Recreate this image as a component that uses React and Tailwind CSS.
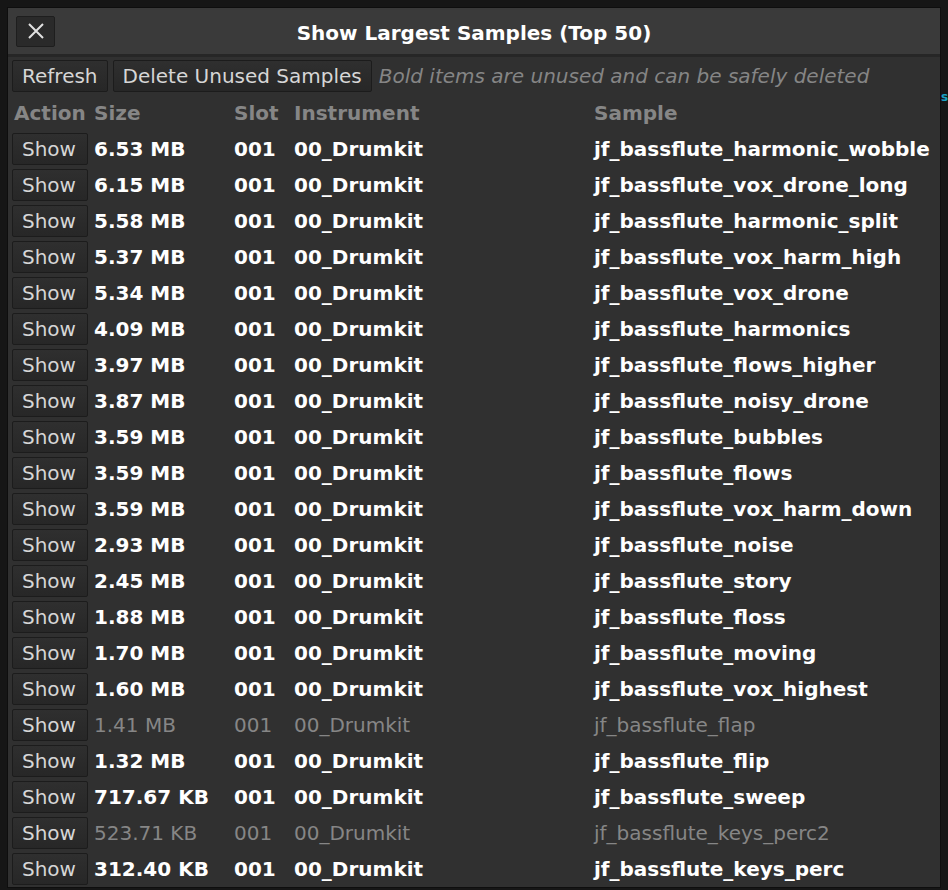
import React from 'react';

const samples = [
    ['6.53 MB', 'jf_bassflute_harmonic_wobble', true],
    ['6.15 MB', 'jf_bassflute_vox_drone_long', true],
    ['5.58 MB', 'jf_bassflute_harmonic_split', true],
    ['5.37 MB', 'jf_bassflute_vox_harm_high', true],
    ['5.34 MB', 'jf_bassflute_vox_drone', true],
    ['4.09 MB', 'jf_bassflute_harmonics', true],
    ['3.97 MB', 'jf_bassflute_flows_higher', true],
    ['3.87 MB', 'jf_bassflute_noisy_drone', true],
    ['3.59 MB', 'jf_bassflute_bubbles', true],
    ['3.59 MB', 'jf_bassflute_flows', true],
    ['3.59 MB', 'jf_bassflute_vox_harm_down', true],
    ['2.93 MB', 'jf_bassflute_noise', true],
    ['2.45 MB', 'jf_bassflute_story', true],
    ['1.88 MB', 'jf_bassflute_floss', true],
    ['1.70 MB', 'jf_bassflute_moving', true],
    ['1.60 MB', 'jf_bassflute_vox_highest', true],
    ['1.41 MB', 'jf_bassflute_flap', false],
    ['1.32 MB', 'jf_bassflute_flip', true],
    ['717.67 KB', 'jf_bassflute_sweep', true],
    ['523.71 KB', 'jf_bassflute_keys_perc2', false],
    ['312.40 KB', 'jf_bassflute_keys_perc', true],
];

const btn = 'flex h-8 items-center rounded-[2px] border border-[#1c1c1c] bg-gradient-to-b from-[#2f2f2f] to-[#272727] px-[9px] text-[#d6d6d6]';

const cols = 'grid grid-cols-[82px_140px_60px_300px_1fr] items-center';

const LargestSamples = () => {
    return (
        <div className="flex h-[890px] overflow-hidden bg-[#161616] pl-2 pt-2 font-['DejaVu_Sans',sans-serif] text-[20px]">
            <div className="flex h-[879px] w-[932px] shrink-0 flex-col bg-[#303030] shadow-[0_0_0_1px_#0e0e0e]">
                <div className="relative flex h-[46px] shrink-0 items-center bg-[#3a3a3a] px-2">
                    <button className="flex h-[31px] w-[39px] items-center justify-center rounded-[2px] border border-[#1e1e1e] bg-[#2a2a2a] text-[#e0e0e0]">
                        <svg width="18" height="18" viewBox="0 0 18 18" fill="none" stroke="currentColor" strokeWidth="2">
                            <path d="M2 2 L16 16 M16 2 L2 16" />
                        </svg>
                    </button>
                    <div className="pointer-events-none absolute inset-0 flex items-center justify-center pt-[3px] font-bold text-white">
                        Show Largest Samples (Top 50)
                    </div>
                </div>
                <div className="h-[3px] shrink-0 bg-[#262626]" />

                <div className="flex items-center gap-[5px] px-1 pt-[3px]">
                    <button className={btn}>Refresh</button>
                    <button className={btn}>Delete Unused Samples</button>
                    <span className="ml-[2px] italic text-[#858585]">Bold items are unused and can be safely deleted</span>
                </div>

                <div className={`${cols} mt-[6px] h-[26px] px-1 font-bold text-[#868686]`}>
                    <span className="pl-[2px]">Action</span>
                    <span>Size</span>
                    <span>Slot</span>
                    <span>Instrument</span>
                    <span>Sample</span>
                </div>

                <div className="mt-[7px] flex flex-col px-1">
                    {samples.map(([size, name, bold], i) => (
                        <div key={i} className={`${cols} h-9 ${bold ? 'font-bold text-white' : 'text-[#868686]'}`}>
                            <div>
                                <button className={`${btn} w-[76px] font-normal`}>Show</button>
                            </div>
                            <span>{size}</span>
                            <span>001</span>
                            <span>00_Drumkit</span>
                            <span className="whitespace-nowrap">{name}</span>
                        </div>
                    ))}
                </div>
            </div>
            <div className="flex flex-1 flex-col pt-[83px] pl-[1px]">
                <span className="text-[12px] font-bold leading-none text-[#1aa3c4]">s</span>
            </div>
        </div>
    );
};

export default LargestSamples;
